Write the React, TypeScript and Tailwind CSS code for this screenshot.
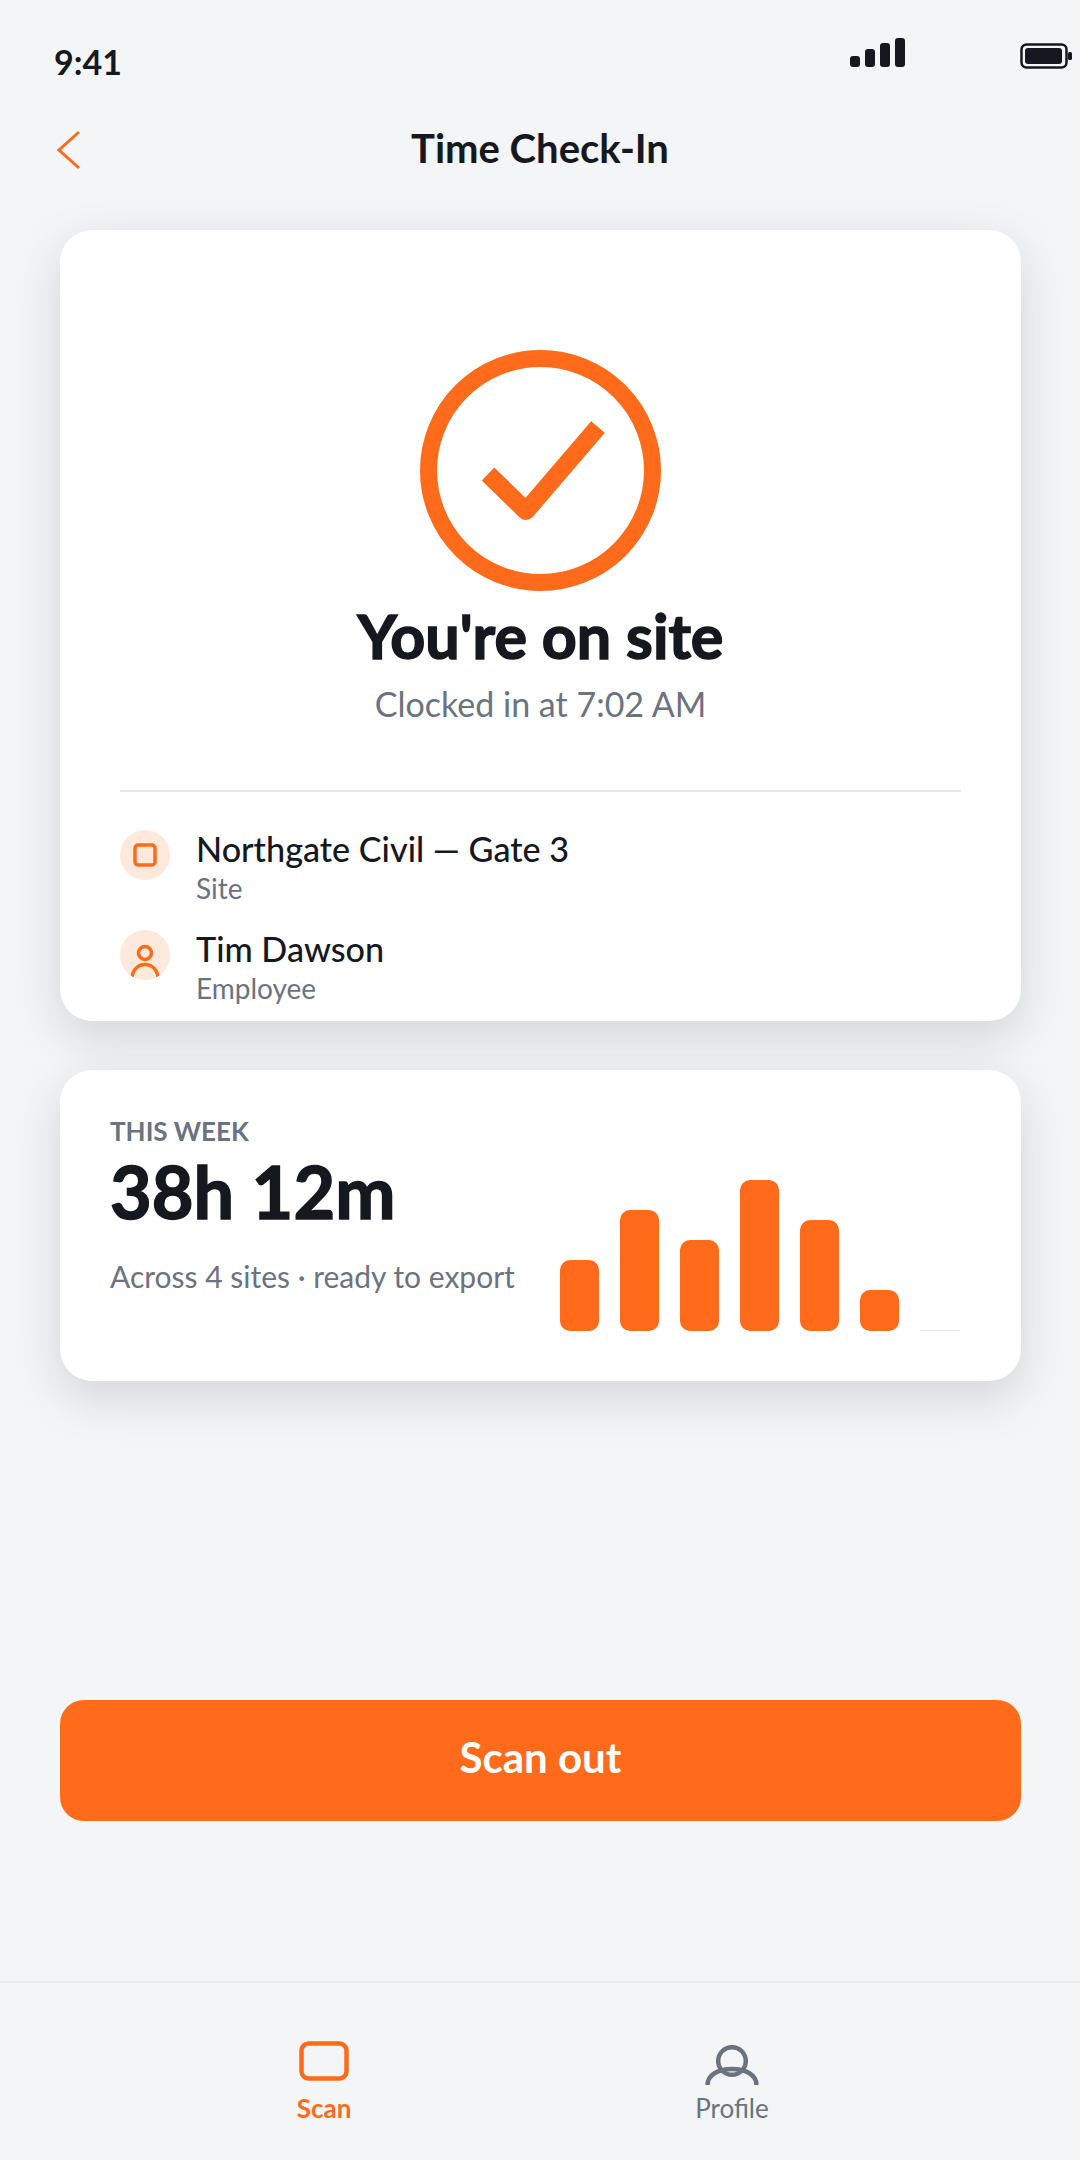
const bars = [71, 121, 91, 151, 111, 41];

const details = [
  { name: "Northgate Civil — Gate 3", label: "Site", icon: "site" },
  { name: "Tim Dawson", label: "Employee", icon: "person" },
];

function SiteIcon() {
  return (
    <svg width="24" height="24" viewBox="0 0 24 24" fill="none" stroke="#ff6b1a" strokeWidth="3.5">
      <rect x="2" y="2" width="20" height="20" rx="3" />
    </svg>
  );
}

function PersonIcon() {
  return (
    <svg width="30" height="36" viewBox="0 0 30 36" fill="none" stroke="#ff6b1a" strokeWidth="3.5" className="mt-[14px] shrink-0">
      <circle cx="15" cy="9" r="6.5" />
      <path d="M2 35 C2 26 8 20.500 15 20.500 C22 20.500 28 26 28 35" />
    </svg>
  );
}

export default function App() {
  return (
    <div className="w-[1080px] h-[2160px] flex flex-col bg-[#f4f5f7] overflow-hidden text-[#15181e]" style={{ fontFamily: "Lato, sans-serif" }}>
      {/* Status bar */}
      <div className="h-[100px] pl-[54px] pr-[8px] flex justify-between">
        <span className="mt-[42px] text-[34px] leading-[40px] font-bold">9:41</span>
        <div className="flex items-start">
          <div className="mt-[38px] h-[29px] flex items-end gap-[5px]">
            <div className="w-[10px] h-[11px] rounded-[3px] bg-[#15181e]" />
            <div className="w-[10px] h-[18px] rounded-[3px] bg-[#15181e]" />
            <div className="w-[10px] h-[24px] rounded-[3px] bg-[#15181e]" />
            <div className="w-[10px] h-[29px] rounded-[3px] bg-[#15181e]" />
          </div>
          <svg width="52" height="26" viewBox="0 0 52 26" className="ml-[115px] mt-[43px]">
            <rect x="1.500" y="1.500" width="45" height="23" rx="5" fill="none" stroke="#15181e" strokeWidth="2.500" />
            <rect x="5" y="5" width="37" height="16" rx="3" fill="#15181e" />
            <rect x="48" y="9" width="4" height="8" rx="1.500" fill="#15181e" />
          </svg>
        </div>
      </div>

      {/* Nav */}
      <div className="relative h-[98px] flex items-center justify-center">
        <svg width="24" height="40" viewBox="0 0 24 40" fill="none" stroke="#ff6b1a" strokeWidth="3" className="absolute left-[57px] top-[30px]">
          <path d="M22 2 L2 20 L22 38" />
        </svg>
        <h1 className="text-[40px] leading-[48px] font-bold -mt-[2px]">Time Check-In</h1>
      </div>

      {/* Status card */}
      <div className="mt-[32px] ml-[60px] w-[961px] h-[791px] bg-white rounded-[32px] shadow-[0_16px_48px_rgba(21,24,30,0.15)] px-[60px] pt-[120px] overflow-hidden">
        <svg width="241" height="241" viewBox="0 0 241 241" fill="none" stroke="#ff6b1a" strokeWidth="17" className="mx-auto">
          <circle cx="120.500" cy="120.500" r="112" />
          <path d="M68 124 L106 161 L178 77" strokeWidth="18" strokeLinejoin="round" />
        </svg>
        <h2 className="mt-[7px] text-center text-[61px] leading-[76px] font-bold [-webkit-text-stroke:1.5px_#15181e]">You're on site</h2>
        <p className="mt-[8px] text-center text-[34px] leading-[44px] text-[#6b7280]">Clocked in at 7:02 AM</p>
        <div className="mt-[64px] border-t-2 border-[#e5e7eb]" />
        <div className="mt-[38px] flex flex-col gap-[50px]">
          {details.map((d) => (
            <div key={d.name} className="flex items-start gap-[26px] h-[50px]">
              <div className="w-[50px] h-[50px] rounded-full bg-[#ffe9dc] flex items-center justify-center overflow-hidden">
                {d.icon === "site" ? <SiteIcon /> : <PersonIcon />}
              </div>
              <div>
                <div className="text-[34.2px] leading-[44px] font-medium -mt-[3px]">{d.name}</div>
                <div className="text-[28px] leading-[36px] -mt-px text-[#6b7280]">{d.label}</div>
              </div>
            </div>
          ))}
        </div>
      </div>

      {/* Week card */}
      <div className="mt-[49px] ml-[60px] w-[961px] h-[311px] bg-white rounded-[32px] shadow-[0_16px_48px_rgba(21,24,30,0.15)] pl-[50px] pr-[61px] pb-[50px] flex justify-between">
        <div className="pt-[44px]">
          <div className="text-[26px] leading-[34px] font-bold text-[#6b7280]">THIS WEEK</div>
          <div className="mt-0 text-[72px] leading-[86px] font-bold [-webkit-text-stroke:1.5px_#15181e]">38h 12m</div>
          <div className="mt-[22px] text-[30px] leading-[40px] text-[#6b7280]">Across 4 sites · ready to export</div>
        </div>
        <div className="flex items-end gap-[21px]">
          {bars.map((h, i) => (
            <div key={i} className="w-[39px] rounded-[10px] bg-[#ff6b1a]" style={{ height: h }} />
          ))}
          <div className="w-[40px] h-px bg-[#e5e7eb]" />
        </div>
      </div>

      {/* Action */}
      <div className="mt-[319px] ml-[60px] w-[961px] h-[121px] pb-[6px] rounded-[24px] bg-[#ff6b1a] flex items-center justify-center text-white text-[42px] font-bold">
        Scan out
      </div>

      {/* Tabs */}
      <div className="mt-[160px] flex-1 border-t-2 border-[#e9ebee] pl-[120px] pr-[144px] grid grid-cols-2">
        <div className="flex flex-col items-center pt-[58px]">
          <svg width="50" height="40" viewBox="0 0 50 40" fill="none" stroke="#ff6b1a" strokeWidth="4.500">
            <rect x="2.500" y="2.500" width="45" height="35" rx="7" />
          </svg>
          <span className="mt-[10px] text-[26px] leading-[34px] font-bold text-[#ff6b1a]">Scan</span>
        </div>
        <div className="flex flex-col items-center pt-[62px]">
          <svg width="54" height="40" viewBox="0 0 54 40" fill="none" stroke="#6b7280" strokeWidth="4.500">
            <circle cx="27" cy="16" r="13.800" />
            <path d="M2.500 40 C2.500 30 13 24 27 24 C41 24 51.500 30 51.500 40" />
          </svg>
          <span className="mt-[6px] text-[26px] leading-[34px] text-[#6b7280]">Profile</span>
        </div>
      </div>
    </div>
  );
}
